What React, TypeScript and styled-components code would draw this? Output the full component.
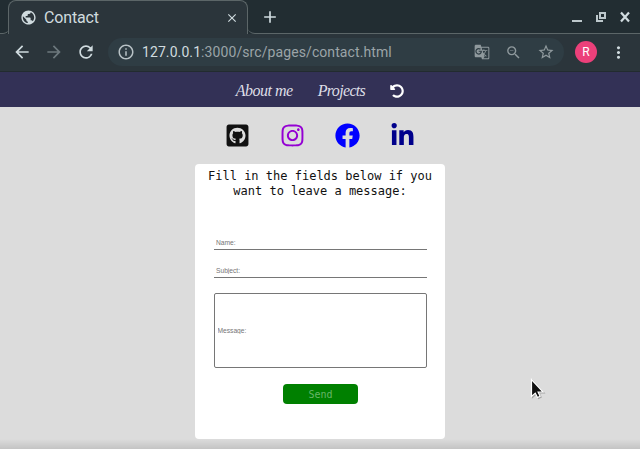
import React from "react";
import styled, { createGlobalStyle } from "styled-components";
import { FaGithubSquare, FaInstagram, FaFacebook, FaLinkedinIn, FaUndoAlt } from "react-icons/fa";
import {
  MdPublic, MdArrowBack, MdArrowForward, MdRefresh, MdInfoOutline, MdGTranslate,
  MdOutlineZoomOut, MdStarBorder, MdMoreVert, MdAdd, MdClose,
} from "react-icons/md";

const GlobalStyle = createGlobalStyle`
  *, *::before, *::after { box-sizing: border-box; }
  body { margin: 0; overflow: hidden; background: #dcdcdc; }
  svg { display: block; flex: none; }
`;

const Window = styled.div`
  width: 640px;
  height: 449px;
  display: flex;
  flex-direction: column;
  overflow: hidden;
  position: relative;
  background: #dcdcdc;
`;

const TabStrip = styled.div`
  height: 34px;
  flex: none;
  display: flex;
  background: #222d32;
`;

const StripLead = styled.div`
  width: 9px;
  border-bottom: 1px solid #5c6668;
  border-bottom-right-radius: 6px;
`;

const Tab = styled.div`
  width: 240px;
  margin-left: -1px;
  padding: 0 8px 0 11px;
  display: flex;
  align-items: center;
  background: #2b353b;
  border: 1px solid #5c6668;
  border-bottom: 0;
  border-radius: 8px 8px 0 0;
  color: #d0dbdf;
`;

const TabTitle = styled.span`
  flex: 1;
  margin-left: 7px;
  font: 16px/32px Roboto, sans-serif;
  letter-spacing: -0.15px;
`;

const StripRest = styled.div`
  flex: 1;
  margin-left: -1px;
  padding: 0 4px 0 13px;
  display: flex;
  align-items: center;
  border-bottom: 1px solid #5c6668;
  border-bottom-left-radius: 8px;
  color: #d0dbdf;
`;

const WindowControls = styled.div`
  margin-left: auto;
  display: flex;
`;

const Toolbar = styled.div`
  height: 38px;
  flex: none;
  display: flex;
  align-items: center;
  padding: 0 12px 1px 12px;
  background: #2b353b;
  border-bottom: 1px solid #222b2f;
  color: #d0dbdf;
`;

const NavButton = styled.span<{ $dim?: boolean }>`
  width: 32px;
  color: ${(p) => (p.$dim ? "#6d787d" : "#d0dbdf")};
`;

const AddressBar = styled.div`
  width: 456px;
  height: 28px;
  padding: 0 9px 0 9px;
  display: flex;
  align-items: center;
  border-radius: 14px;
  background: #2f3d44;
  color: #b8c2c6;
`;

const Url = styled.span`
  flex: 1;
  margin-left: 7px;
  padding-top: 1px;
  font: 14px/27px Roboto, sans-serif;
  letter-spacing: 0.09px;
  color: #9ba4a8;
  white-space: nowrap;
`;

const Host = styled.span`
  color: #d0dbdf;
`;

const AddressActions = styled.div`
  display: flex;
  align-items: center;
  gap: 15px;
  color: #8f999d;
`;

const Avatar = styled.div`
  width: 22px;
  height: 22px;
  margin: 0 12px 0 11px;
  border-radius: 50%;
  background: #ec407a;
  color: #fff;
  text-align: center;
  font: 12px/22px Roboto, sans-serif;
`;

const SiteNav = styled.nav`
  height: 35px;
  flex: none;
  display: flex;
  align-items: center;
  justify-content: center;
  gap: 25px;
  padding-top: 3px;
  background: #333156;
  color: #fff;
`;

const NavLink = styled.a<{ $spacing: number }>`
  font: italic 16px/20px "Liberation Serif", serif;
  letter-spacing: ${(p) => p.$spacing}px;
  color: #dedee6;
`;

const SocialRow = styled.div`
  height: 57px;
  flex: none;
  display: flex;
  align-items: center;
  justify-content: center;
  gap: 30px;
`;

const Card = styled.form`
  width: 250px;
  height: 275px;
  flex: none;
  align-self: center;
  display: flex;
  flex-direction: column;
  align-items: center;
  padding-top: 5px;
  border-radius: 4px;
  background: #fff;
`;

const Heading = styled.h1`
  width: 230px;
  height: 65px;
  margin: 0;
  text-align: center;
  font: 12px/15px "DejaVu Sans Mono", monospace;
  color: #111;
`;

const Field = styled.input`
  width: 213px;
  height: 16px;
  margin: 0 0 12px 1px;
  padding: 2px 2px 0;
  border: 0;
  border-bottom: 1px solid #767676;
  outline: 0;
  border-radius: 0;
  background: #fff;
  font: 6.67px "Liberation Sans", sans-serif;
  &::placeholder { color: #757575; }
`;

const MessageField = styled(Field)`
  height: 75px;
  margin: 3px 0 16px 1px;
  padding: 1px 2.5px;
  border: 1px solid #767676;
  border-radius: 2px;
`;

const SendButton = styled.button`
  width: 75px;
  height: 20px;
  margin-left: 1px;
  padding: 0;
  border: 0;
  border-radius: 4px;
  background: #008000;
  color: #67b567;
  font: 10px/19px "DejaVu Sans Mono", monospace;
`;

const BottomShade = styled.div`
  position: absolute;
  left: 0;
  right: 0;
  bottom: 0;
  height: 10px;
  background: linear-gradient(rgba(0, 0, 0, 0), rgba(0, 0, 0, 0.11));
`;

const Pointer = styled.svg`
  position: absolute;
  left: 530px;
  top: 378px;
  filter: drop-shadow(1px 1px 0.5px rgba(0, 0, 0, 0.25));
`;

const links = [
  { label: "About me", spacing: -0.5 },
  { label: "Projects", spacing: -0.65 },
];

export default function App() {
  return (
    <Window>
      <GlobalStyle />
      <TabStrip>
        <StripLead />
        <Tab>
          <MdPublic size={17} />
          <TabTitle>Contact</TabTitle>
          <MdClose size={14} />
        </Tab>
        <StripRest>
          <MdAdd size={20} />
          <WindowControls>
            <svg width="64" height="20" viewBox="0 0 64 20" fill="none" stroke="#bdc8cc">
              <path d="M0 14h10" strokeWidth="2" />
              <path d="M28 6h5v5h-5zM25 8v6h6" strokeWidth="2" />
              <path d="M49 5.500l8 9M57 5.500l-8 9" stroke="#d0dbdf" strokeWidth="2.200" />
            </svg>
          </WindowControls>
        </StripRest>
      </TabStrip>
      <Toolbar>
        <NavButton><MdArrowBack size={20} /></NavButton>
        <NavButton $dim><MdArrowForward size={20} /></NavButton>
        <NavButton><MdRefresh size={20} /></NavButton>
        <AddressBar>
          <MdInfoOutline size={18} />
          <Url><Host>127.0.0.1</Host>:3000/src/pages/contact.html</Url>
          <AddressActions>
            <MdGTranslate size={16} />
            <MdOutlineZoomOut size={17} />
            <MdStarBorder size={18} />
          </AddressActions>
        </AddressBar>
        <Avatar>R</Avatar>
        <MdMoreVert size={19} />
      </Toolbar>
      <SiteNav>
        {links.map((l) => (
          <NavLink key={l.label} $spacing={l.spacing}>{l.label}</NavLink>
        ))}
        <FaUndoAlt size={14} />
      </SiteNav>
      <SocialRow>
        <FaGithubSquare size={25} color="#111" />
        <FaInstagram size={25} color="#9400d3" />
        <FaFacebook size={25} color="#0000ff" />
        <FaLinkedinIn size={25} color="#00008b" />
      </SocialRow>
      <Card>
        <Heading>Fill in the fields below if you want to leave a message:</Heading>
        <Field placeholder="Name:" />
        <Field placeholder="Subject:" />
        <MessageField placeholder="Message:" />
        <SendButton type="button">Send</SendButton>
      </Card>
      <BottomShade />
      <Pointer width="16" height="22" viewBox="0 0 16 22">
        <path d="M1.500 1.500v17l3.800-3.400 2.200 4.400 2.600-1.300-2-4.200h5z" fill="#111" stroke="#fff" strokeWidth="1.200" />
      </Pointer>
    </Window>
  );
}
